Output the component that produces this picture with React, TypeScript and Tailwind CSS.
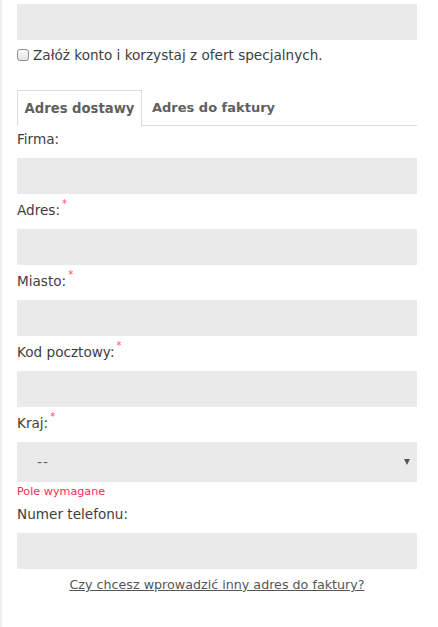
import React from "react";

const font = { fontFamily: '"DejaVu Sans", "Noto Sans", sans-serif' };

function Label({ text, required, first }: { text: string; required?: boolean; first?: boolean }) {
  return (
    <div
      className={`${first ? "mt-[3px]" : "mt-[6px]"} mb-[9px] h-[20px] leading-[20px] text-[13.6px] text-[#3d3d3d] flex`}
    >
      <span>{text}</span>
      {required && <span className="text-[10px] leading-[10px] text-[#ff4d6d] ml-[2px] mt-[-1px]">*</span>}
    </div>
  );
}

function Input() {
  return <div className="h-[36px] w-full bg-[#eaeaea]" />;
}

export default function App() {
  return (
    <div className="min-h-[627px] w-[438px] bg-white border-l-[2px] border-[#efefef]" style={font}>
      <div className="w-[400px] ml-[15px] pt-[4px] flex flex-col">
        <Input />
        <div className="mt-[6px] h-[18px] flex items-center">
          <span className="w-[12px] h-[12px] rounded-[3px] border border-[#8f8f8f] bg-gradient-to-b from-[#fafafa] to-[#e4e4e4] mr-[4px]" />
          <span className="text-[13.6px] text-[#3d3d3d] leading-[18px]">Załóż konto i korzystaj z ofert specjalnych.</span>
        </div>
        <div className="mt-[26px] h-[36px] flex border-b border-[#dddddd]">
          <div className="w-[125px] h-[36px] border border-[#dddddd] border-b-0 bg-white flex items-center justify-center text-[13.2px] font-bold text-[#5f5f5f]">
            Adres dostawy
          </div>
          <div className="px-[10px] flex items-center text-[13px] font-bold text-[#5f5f5f]">Adres do faktury</div>
        </div>
        <Label text="Firma:" first />
        <Input />
        <Label text="Adres:" required />
        <Input />
        <Label text="Miasto:" required />
        <Input />
        <Label text="Kod pocztowy:" required />
        <Input />
        <Label text="Kraj:" required />
        <div className="h-[40px] bg-[#eaeaea] flex items-center justify-between pl-[20px] pr-[7px]">
          <span className="text-[14px] text-[#666] tracking-[1px]">--</span>
          <svg width="6" height="6" viewBox="0 0 6 6">
            <path d="M0 0 H6 L3 6 Z" fill="#555" />
          </svg>
        </div>
        <div className="mt-[2px] h-[16px] leading-[16px] text-[11.2px] text-[#ff2a55]">Pole wymagane</div>
        <div className="mt-[4px] mb-[9px] h-[20px] leading-[20px] text-[13.6px] text-[#3d3d3d]">Numer telefonu:</div>
        <Input />
        <div className="mt-[5px] h-[20px] leading-[20px] text-center">
          <a href="#" className="text-[12.7px] text-[#555] underline">Czy chcesz wprowadzić inny adres do faktury?</a>
        </div>
      </div>
    </div>
  );
}
